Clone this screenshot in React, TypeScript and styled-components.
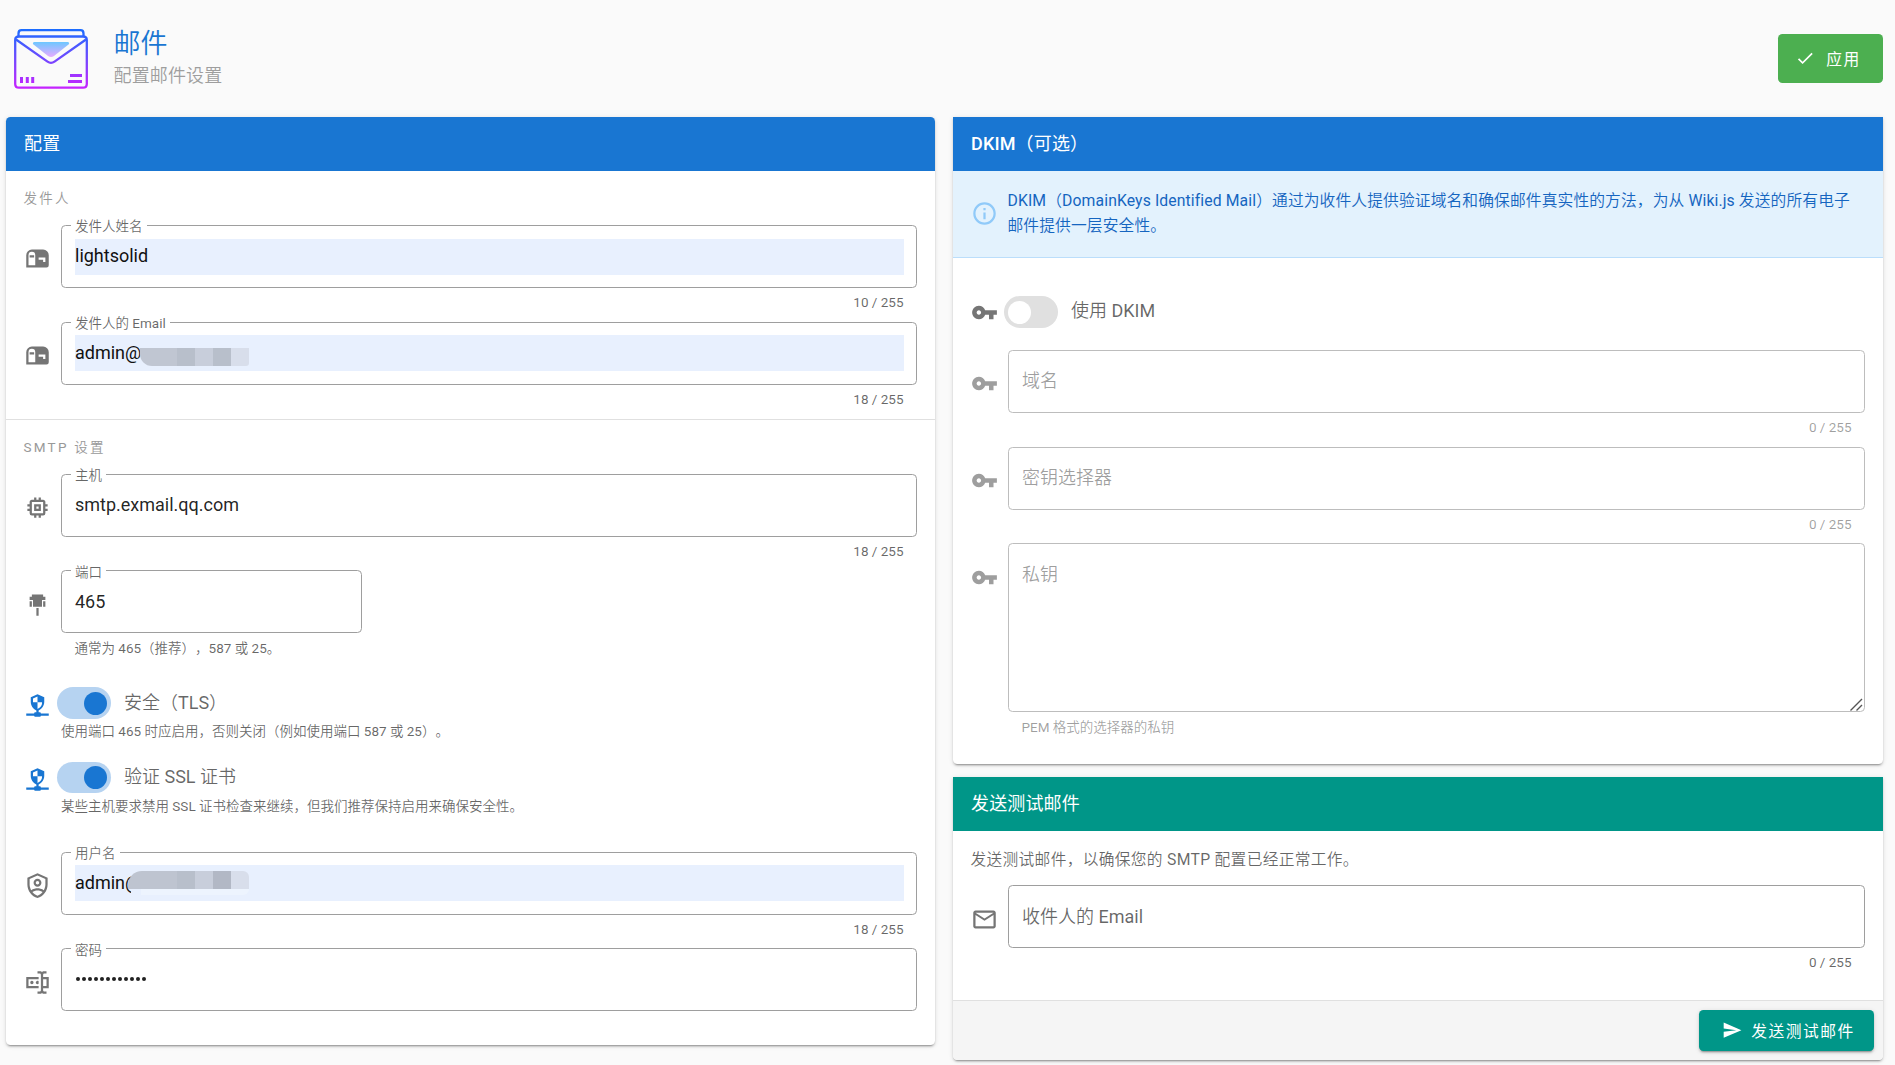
import React from 'react';
import styled, { createGlobalStyle, css } from 'styled-components';

const GlobalStyle = createGlobalStyle`
  * { box-sizing: border-box; }
  html, body { margin: 0; padding: 0; background: #fafafa; }
  body {
    font-family: Roboto, "Noto Sans CJK SC DemiLight", "Noto Sans CJK SC Light", "Noto Sans CJK SC", sans-serif;
    font-size: 18px;
    color: rgba(0, 0, 0, 0.87);
    text-spacing-trim: space-all;
    overflow: hidden;
  }
`;

const BLUE = '#1976d2';
const TEAL = '#009688';
const HEADING_STACK = "Roboto, 'Noto Sans CJK SC', sans-serif";

const ICONS = {
  mailbox:
    'M17,4H7A5,5 0 0,0 2,9V20H20A2,2 0 0,0 22,18V9A5,5 0 0,0 17,4M10,18H4V9A3,3 0 0,1 7,6A3,3 0 0,1 10,9V18M19,15H17V13H13V11H19V15M9,11H5V9H9V11Z',
  memory:
    'M17,17H7V7H17M21,11V9H19V7C19,5.89 18.1,5 17,5H15V3H13V5H11V3H9V5H7C5.89,5 5,5.89 5,7V9H3V11H5V13H3V15H5V17A2,2 0 0,0 7,19H9V21H11V19H13V21H15V19H17A2,2 0 0,0 19,17V15H21V13H19V11M13,13H11V11H13M15,9H9V15H15V9Z',
  serialPort: 'M7,3H17V5H19V8H16V14H8V8H5V5H7V3M17,9H19V14H17V9M5,9H7V14H5V9M11,15H13V22H11V15Z',
  shieldNetwork:
    'M13,18H14A1,1 0 0,1 15,19H22V21H15A1,1 0 0,1 14,22H10A1,1 0 0,1 9,21H2V19H9A1,1 0 0,1 10,18H11V16.34C8.07,15.13 6,12 6,8.67V4.67L12,2L18,4.67V8.67C18,12 15.93,15.13 13,16.34V18M12,4L8,5.69V9H12V4M12,9V15C13.91,14.53 16,12.06 16,10V9H12Z',
  shieldAccount:
    'M12 1L3 5V11C3 16.55 6.84 21.74 12 23C17.16 21.74 21 16.55 21 11V5L12 1M12 3.18L19 6.3V11.22C19 12.92 18.5 14.65 17.65 16.17C16 14.94 13.26 14.5 12 14.5C10.74 14.5 8 14.94 6.35 16.17C5.5 14.65 5 12.92 5 11.22V6.3L12 3.18M12 6C10.07 6 8.5 7.57 8.5 9.5S10.07 13 12 13 15.5 11.43 15.5 9.5 13.93 6 12 6M12 8C12.83 8 13.5 8.67 13.5 9.5S12.83 11 12 11 10.5 10.33 10.5 9.5 11.17 8 12 8M12 16.5C13.57 16.5 15.64 17.11 16.53 17.84C15.29 19.38 13.7 20.55 12 21C10.3 20.55 8.71 19.38 7.47 17.84C8.37 17.11 10.43 16.5 12 16.5Z',
  textboxPassword:
    'M17,7H22V17H17V19A1,1 0 0,0 18,20H20V22H17.5C16.95,22 16,21.55 16,21C16,21.55 15.05,22 14.5,22H12V20H14A1,1 0 0,0 15,19V5A1,1 0 0,0 14,4H12V2H14.5C15.05,2 16,2.45 16,3C16,2.45 16.95,2 17.5,2H20V4H18A1,1 0 0,0 17,5V7M2,7H13V9H4V15H13V17H2V7M20,15V9H17V15H20M8.5,12A1.5,1.5 0 0,0 7,10.5A1.5,1.5 0 0,0 5.5,12A1.5,1.5 0 0,0 7,13.5A1.5,1.5 0 0,0 8.5,12M13,10.89C12.39,10.33 11.44,10.38 10.88,11C10.32,11.6 10.37,12.55 11,13.11C11.55,13.63 12.43,13.63 13,13.11V10.89Z',
  key:
    'M7 14C5.9 14 5 13.1 5 12S5.9 10 7 10 9 10.9 9 12 8.1 14 7 14M12.6 10C11.8 7.7 9.6 6 7 6C3.7 6 1 8.7 1 12S3.7 18 7 18C9.6 18 11.8 16.3 12.6 14H16V18H20V14H23V10H12.6Z',
  email:
    'M22 6C22 4.9 21.1 4 20 4H4C2.9 4 2 4.9 2 6V18C2 19.1 2.9 20 4 20H20C21.1 20 22 19.1 22 18V6M20 6L12 11L4 6H20M20 18H4V8L12 13L20 8V18Z',
  info:
    'M11,9H13V7H11M12,20C7.59,20 4,16.41 4,12C4,7.59 7.59,4 12,4C16.41,4 20,7.59 20,12C20,16.41 16.41,20 12,20M12,2A10,10 0 0,0 2,12A10,10 0 0,0 12,22A10,10 0 0,0 22,12A10,10 0 0,0 12,2M11,17H13V11H11V17Z',
  check: 'M21,7L9,19L3.5,13.5L4.91,12.09L9,16.17L19.59,5.59L21,7Z',
  send: 'M2,21L23,12L2,3V10L17,12L2,14V21Z',
};

const Svg = styled.svg<{ $size: number; $color: string }>`
  display: block;
  flex: none;
  width: ${(p) => p.$size}px;
  height: ${(p) => p.$size}px;
  fill: ${(p) => p.$color};
`;

type IconName = keyof typeof ICONS;

const Icon = ({ name, size = 27, color = '#757575' }: { name: IconName; size?: number; color?: string }) => (
  <Svg $size={size} $color={color} viewBox="0 0 24 24">
    <path fillRule="evenodd" d={ICONS[name]} />
  </Svg>
);

const Page = styled.div`
  height: 1065px;
  padding: 0 12px 0 6px;
  overflow: hidden;
`;

const PageHeader = styled.header`
  display: flex;
  align-items: center;
  height: 117px;
`;

const Logo = styled.svg`
  display: block;
  flex: none;
  width: 90px;
  height: 90px;
`;

const Titles = styled.div`
  flex: 1;
  padding: 0 0 2px 17.5px;
`;

const Title = styled.h1`
  margin: 0;
  font-size: 27px;
  font-weight: 400;
  line-height: 36px;
  color: ${BLUE};
`;

const Subtitle = styled.div`
  line-height: 28px;
  letter-spacing: 0.15px;
  color: #9e9e9e;
`;

const Button = styled.button<{ $color: string; $large?: boolean; $raised?: boolean }>`
  display: flex;
  align-items: center;
  gap: ${(p) => (p.$large ? 11 : 9)}px;
  height: ${(p) => (p.$large ? 49 : 41)}px;
  width: ${(p) => (p.$large ? 105 : 175)}px;
  padding: 0 0 0 ${(p) => (p.$large ? 17 : 23)}px;
  border: 0;
  border-radius: 4.5px;
  background: ${(p) => p.$color};
  color: #fff;
  font: 400 15.75px/24px ${HEADING_STACK};
  letter-spacing: 1.5px;
  white-space: nowrap;
  ${(p) =>
    p.$raised &&
    css`
      box-shadow: 0 3px 1px -2px rgba(0, 0, 0, 0.2), 0 2px 2px 0 rgba(0, 0, 0, 0.14), 0 1px 5px 0 rgba(0, 0, 0, 0.12);
    `}
`;

const ButtonText = styled.span`
  padding-top: 2px;
`;

const Columns = styled.main`
  display: grid;
  grid-template-columns: 929px 930px;
  column-gap: 18px;
  align-items: start;
`;

const Stack = styled.div`
  display: grid;
  row-gap: 13px;
`;

const Card = styled.section<{ $height: number; $square?: boolean }>`
  display: flex;
  flex-direction: column;
  height: ${(p) => p.$height}px;
  border-radius: ${(p) => (p.$square ? '0 0 4.5px 4.5px' : '4.5px')};
  background: #fff;
  box-shadow: 0 3px 1px -2px rgba(0, 0, 0, 0.2), 0 2px 2px 0 rgba(0, 0, 0, 0.14), 0 1px 5px 0 rgba(0, 0, 0, 0.12);
`;

const CardHeader = styled.h2<{ $color: string; $square?: boolean; $line?: number }>`
  flex: none;
  margin: 0;
  height: 54px;
  padding: 0 18px;
  font: 400 18px / ${(p) => p.$line ?? 53}px ${HEADING_STACK};
  letter-spacing: 0.15px;
  color: #fff;
  background: ${(p) => p.$color};
  border-radius: ${(p) => (p.$square ? '0' : '4.5px 4.5px 0 0')};
`;

const Acronym = styled.span`
  font-weight: 500;
`;

const Overline = styled.div`
  height: 54px;
  padding: 0 17.5px;
  line-height: 54px;
  font-size: 13.5px;
  letter-spacing: 2.25px;
  color: #999;
`;

const Divider = styled.hr`
  margin: 0;
  width: 100%;
  border: 0;
  border-top: 1px solid #e0e0e0;
`;

const FieldRow = styled.div<{ $height: number }>`
  display: grid;
  grid-template-columns: 27px 1fr;
  column-gap: 10px;
  height: ${(p) => p.$height}px;
  padding: 0 18px;
`;

const IconCell = styled.div<{ $top: number }>`
  padding-top: ${(p) => p.$top}px;
`;

const Outline = styled.div<{ $disabled?: boolean; $height: number; $width?: number }>`
  position: relative;
  height: ${(p) => p.$height}px;
  width: ${(p) => (p.$width ? `${p.$width}px` : 'auto')};
  padding: 12px 12px 0 13px;
  border: 1px solid ${(p) => (p.$disabled ? '#bdbdbd' : '#9e9e9e')};
  border-radius: 4.5px;
`;

const FloatingLabel = styled.label<{ $top: number }>`
  position: absolute;
  top: ${(p) => p.$top}px;
  left: 9px;
  padding: 0 4px;
  background: #fff;
  font-size: 13.5px;
  line-height: 20px;
  color: rgba(0, 0, 0, 0.6);
`;

const Value = styled.div<{ $autofill?: boolean; $top?: number; $line?: number }>`
  position: relative;
  height: 36px;
  margin-top: ${(p) => p.$top ?? 1}px;
  line-height: ${(p) => p.$line ?? 34}px;
  background: ${(p) => (p.$autofill ? '#e8f0fe' : 'transparent')};
  color: ${(p) => (p.$autofill ? '#111' : 'rgba(0, 0, 0, 0.87)')};
`;

const Placeholder = styled.div<{ $disabled?: boolean; $line: number }>`
  height: 36px;
  line-height: ${(p) => p.$line}px;
  color: ${(p) => (p.$disabled ? 'rgba(0, 0, 0, 0.38)' : 'rgba(0, 0, 0, 0.6)')};
`;

const Dots = styled.div`
  display: flex;
  align-items: center;
  gap: 2px;
  height: 36px;
  margin-top: 1px;
  padding: 0 0 3px 1px;
`;

const Dot = styled.span`
  width: 4px;
  height: 4px;
  border-radius: 50%;
  background: #212121;
`;

const Message = styled.div<{ $disabled?: boolean; $right?: boolean }>`
  padding: ${(p) => (p.$right ? 6 : 7)}px 13.5px 0 13.5px;
  font-size: 13.5px;
  line-height: 16px;
  text-align: ${(p) => (p.$right ? 'right' : 'left')};
  color: ${(p) => (p.$disabled ? 'rgba(0, 0, 0, 0.38)' : 'rgba(0, 0, 0, 0.6)')};
`;

const Mosaic = styled.span<{ $left: number; $top: number; $radius: string; $h?: number }>`
  position: absolute;
  left: ${(p) => p.$left}px;
  top: ${(p) => p.$top}px;
  display: flex;
  height: ${(p) => p.$h ?? 18}px;
  border-radius: ${(p) => p.$radius};
  overflow: hidden;
`;

const Block = styled.span<{ $w: number; $c: string }>`
  width: ${(p) => p.$w}px;
  background: ${(p) => p.$c};
`;

const ResizeHandle = styled.svg`
  position: absolute;
  right: 1px;
  bottom: 0;
  width: 13px;
  height: 13px;
`;

const SwitchBlock = styled.div<{ $height: number }>`
  height: ${(p) => p.$height}px;
  padding: 0 18px;
`;

const SwitchRow = styled.div<{ $drop: number }>`
  display: flex;
  align-items: center;
  height: 32px;
  & > svg {
    margin-top: ${(p) => p.$drop}px;
  }
`;

const Track = styled.span<{ $on?: boolean }>`
  display: flex;
  align-items: center;
  justify-content: ${(p) => (p.$on ? 'flex-end' : 'flex-start')};
  width: 54px;
  height: 31.5px;
  margin: 0 13px 0 6px;
  padding: 0 4.5px 0 4px;
  border-radius: 16px;
  background: ${(p) => (p.$on ? '#b6d3f1' : '#e0e0e0')};
`;

const Thumb = styled.span<{ $on?: boolean }>`
  width: 23px;
  height: 23px;
  border-radius: 50%;
  background: ${(p) => (p.$on ? BLUE : '#fff')};
`;

const SwitchLabel = styled.span<{ $on?: boolean }>`
  line-height: 30px;
  padding-bottom: ${(p) => (p.$on ? 1 : 3)}px;
  color: rgba(0, 0, 0, 0.6);
`;

const SwitchHint = styled.div`
  padding: 4px 0 0 37px;
  font-size: 13.5px;
  line-height: 17px;
  color: rgba(0, 0, 0, 0.6);
`;

const Spacer = styled.div<{ $h: number }>`
  flex: none;
  height: ${(p) => p.$h}px;
`;

const Banner = styled.div`
  display: flex;
  align-items: center;
  gap: 9.5px;
  height: 87px;
  padding: 0 0 2px 18px;
  border-bottom: 1px solid #bbdefb;
  background: #e3f2fd;
`;

const BannerText = styled.p`
  margin: 0;
  font-size: 15.75px;
  line-height: 25px;
  letter-spacing: 0.11px;
  white-space: nowrap;
  color: #1565c0;
`;

const Intro = styled.p`
  margin: 0;
  height: 54px;
  padding: 0 17.5px;
  font-size: 15.75px;
  line-height: 58px;
  letter-spacing: 0.28px;
  color: rgba(0, 0, 0, 0.6);
`;

const CardActions = styled.footer`
  display: flex;
  justify-content: flex-end;
  height: 60px;
  padding: 9px 9px 0;
  border-top: 1px solid #e0e0e0;
  border-radius: 0 0 4.5px 4.5px;
  background: #f5f5f5;
`;

type FieldProps = {
  icon: IconName;
  iconTop?: number;
  label?: string;
  labelTop?: number;
  placeholder?: string;
  placeholderLine?: number;
  counter?: string;
  hint?: string;
  disabled?: boolean;
  height: number;
  boxHeight?: number;
  boxWidth?: number;
  children?: React.ReactNode;
};

const Field = ({
  icon,
  iconTop = 20,
  label,
  labelTop = -10,
  placeholder,
  placeholderLine = 35,
  counter,
  hint,
  disabled,
  height,
  boxHeight = 63,
  boxWidth,
  children,
}: FieldProps) => (
  <FieldRow $height={height}>
    <IconCell $top={iconTop}>
      <Icon name={icon} color={disabled ? '#9e9e9e' : '#757575'} />
    </IconCell>
    <div>
      <Outline $disabled={disabled} $height={boxHeight} $width={boxWidth}>
        {label && <FloatingLabel $top={labelTop}>{label}</FloatingLabel>}
        {placeholder && (
          <Placeholder $disabled={disabled} $line={placeholderLine}>
            {placeholder}
          </Placeholder>
        )}
        {children}
      </Outline>
      {counter && (
        <Message $right $disabled={disabled}>
          {counter}
        </Message>
      )}
      {hint && <Message $disabled={disabled}>{hint}</Message>}
    </div>
  </FieldRow>
);

type SwitchProps = {
  icon: IconName;
  color: string;
  label: string;
  hint?: string;
  on?: boolean;
  height: number;
  drop: number;
};

const Switch = ({ icon, color, label, hint, on, height, drop }: SwitchProps) => (
  <SwitchBlock $height={height}>
    <SwitchRow $drop={drop}>
      <Icon name={icon} color={color} />
      <Track $on={on}>
        <Thumb $on={on} />
      </Track>
      <SwitchLabel $on={on}>{label}</SwitchLabel>
    </SwitchRow>
    {hint && <SwitchHint>{hint}</SwitchHint>}
  </SwitchBlock>
);

const MailLogo = () => (
  <Logo viewBox="6 14 90 90" fill="none">
    <defs>
      <linearGradient id="stroke" gradientUnits="userSpaceOnUse" x1="0" y1="29" x2="0" y2="89">
        <stop offset="0" stopColor="#1a6dff" />
        <stop offset="1" stopColor="#c822ff" />
      </linearGradient>
      <linearGradient id="flap" gradientUnits="userSpaceOnUse" x1="0" y1="42" x2="0" y2="57">
        <stop offset="0" stopColor="#6dc7ff" />
        <stop offset="1" stopColor="#e6abff" />
      </linearGradient>
    </defs>
    <path fill="url(#flap)" d="M34 42H68Q70 43 68.500 44.500L54 56Q51 58 48 56L33.500 44.500Q32 43 34 42Z" />
    <g stroke="url(#stroke)" strokeWidth="2.300">
      <path d="M15.200 40Q15.200 36.500 19 36.500H83Q86.800 36.500 86.800 40V84Q86.800 87.700 83 87.700H19Q15.200 87.700 15.200 84Z" />
      <path d="M18.500 37V33.500Q18.500 30.200 21.500 30.200H80.500Q83.500 30.200 83.500 33.500V37" />
      <path d="M16 39.500L47.500 61.600Q51 64 54.500 61.600L86 39.500" />
    </g>
    <path
      fill="url(#stroke)"
      d="M20 77H23V83H20ZM25.800 77H28.800V83H25.800ZM31.200 77H34.200V83H31.200ZM70 74H82V77H70ZM68 80H82V83H68Z"
    />
  </Logo>
);

const App = () => (
  <Page>
    <GlobalStyle />
    <PageHeader>
      <MailLogo />
      <Titles>
        <Title>邮件</Title>
        <Subtitle>配置邮件设置</Subtitle>
      </Titles>
      <Button $color="#4caf50" $large>
        <Icon name="check" size={20.25} color="#fff" />
        <ButtonText>应用</ButtonText>
      </Button>
    </PageHeader>
    <Columns>
      <Card $height={928}>
        <CardHeader $color={BLUE}>配置</CardHeader>
        <Overline>发件人</Overline>
        <Field icon="mailbox" label="发件人姓名" counter="10 / 255" height={97}>
          <Value $autofill>lightsolid</Value>
        </Field>
        <Field icon="mailbox" label="发件人的 Email" counter="18 / 255" height={97}>
          <Value $autofill $top={0} $line={36}>
            admin@
            <Mosaic $left={65} $top={13} $radius="0 0 3px 12px">
              <Block $w={37} $c="#c0c6d2" />
              <Block $w={18} $c="#b8bfcb" />
              <Block $w={18} $c="#c8cedb" />
              <Block $w={18} $c="#b8bfcb" />
              <Block $w={18} $c="#d8deeb" />
            </Mosaic>
          </Value>
        </Field>
        <Divider />
        <Overline>SMTP 设置</Overline>
        <Field icon="memory" label="主机" counter="18 / 255" height={96}>
          <Value>smtp.exmail.qq.com</Value>
        </Field>
        <Field
          icon="serialPort"
          iconTop={21}
          label="端口"
          labelTop={-9}
          hint="通常为 465（推荐），587 或 25。"
          height={117}
          boxWidth={301}
        >
          <Value $line={35}>465</Value>
        </Field>
        <Switch
          icon="shieldNetwork"
          color={BLUE}
          label="安全（TLS）"
          hint="使用端口 465 时应启用，否则关闭（例如使用端口 587 或 25）。"
          on
          height={74.5}
          drop={4}
        />
        <Switch
          icon="shieldNetwork"
          color={BLUE}
          label="验证 SSL 证书"
          hint="某些主机要求禁用 SSL 证书检查来继续，但我们推荐保持启用来确保安全性。"
          on
          height={74.5}
          drop={3}
        />
        <Spacer $h={16} />
        <Field icon="shieldAccount" label="用户名" counter="18 / 255" height={96}>
          <Value $autofill $top={0} $line={36}>
            admin@
            <Mosaic $left={53} $top={6} $radius="14px 6px 0 0">
              <Block $w={49} $c="#bec4d0" />
              <Block $w={18} $c="#b8bfcb" />
              <Block $w={18} $c="#c8cedb" />
              <Block $w={18} $c="#b2b8c5" />
              <Block $w={18} $c="#d8deeb" />
            </Mosaic>
            <Mosaic $left={56} $top={24} $h={6} $radius="0 0 6px 0">
              <Block $w={10} $c="#e8f0fe" />
              <Block $w={108} $c="#edf4fe" />
            </Mosaic>
          </Value>
        </Field>
        <Field icon="textboxPassword" iconTop={21} label="密码" labelTop={-9} height={97}>
          <Dots>
            {Array.from({ length: 12 }, (_, i) => (
              <Dot key={i} />
            ))}
          </Dots>
        </Field>
      </Card>
      <Stack>
        <Card $height={647} $square>
          <CardHeader $color={BLUE} $square>
            <Acronym>DKIM</Acronym>（可选）
          </CardHeader>
          <Banner>
            <Icon name="info" color="#90caf9" />
            <BannerText>
              DKIM（DomainKeys Identified Mail）通过为收件人提供验证域名和确保邮件真实性的方法，为从 Wiki.js 发送的所有电子
              <br />
              邮件提供一层安全性。
            </BannerText>
          </Banner>
          <Spacer $h={38} />
          <Switch icon="key" color="#757575" label="使用 DKIM" height={54} drop={0} />
          <Field icon="key" placeholder="域名" counter="0 / 255" disabled height={97} />
          <Field icon="key" placeholder="密钥选择器" counter="0 / 255" disabled height={96} />
          <Field
            icon="key"
            iconTop={21}
            placeholder="私钥"
            placeholderLine={37}
            hint="PEM 格式的选择器的私钥"
            disabled
            height={200}
            boxHeight={169}
          >
            <ResizeHandle viewBox="0 0 13 13" fill="none" stroke="#555" strokeWidth="1.400">
              <path d="M0.500 12.500L12 1M6.500 12.500L12 7" />
            </ResizeHandle>
          </Field>
        </Card>
        <Card $height={283} $square>
          <CardHeader $color={TEAL} $square $line={54}>
            发送测试邮件
          </CardHeader>
          <Intro>发送测试邮件，以确保您的 SMTP 配置已经正常工作。</Intro>
          <Field
            icon="email"
            iconTop={21}
            placeholder="收件人的 Email"
            placeholderLine={37}
            counter="0 / 255"
            height={115}
          />
          <CardActions>
            <Button $color={TEAL} $raised>
              <Icon name="send" size={20.25} color="#fff" />
              <ButtonText>发送测试邮件</ButtonText>
            </Button>
          </CardActions>
        </Card>
      </Stack>
    </Columns>
  </Page>
);

export default App;
